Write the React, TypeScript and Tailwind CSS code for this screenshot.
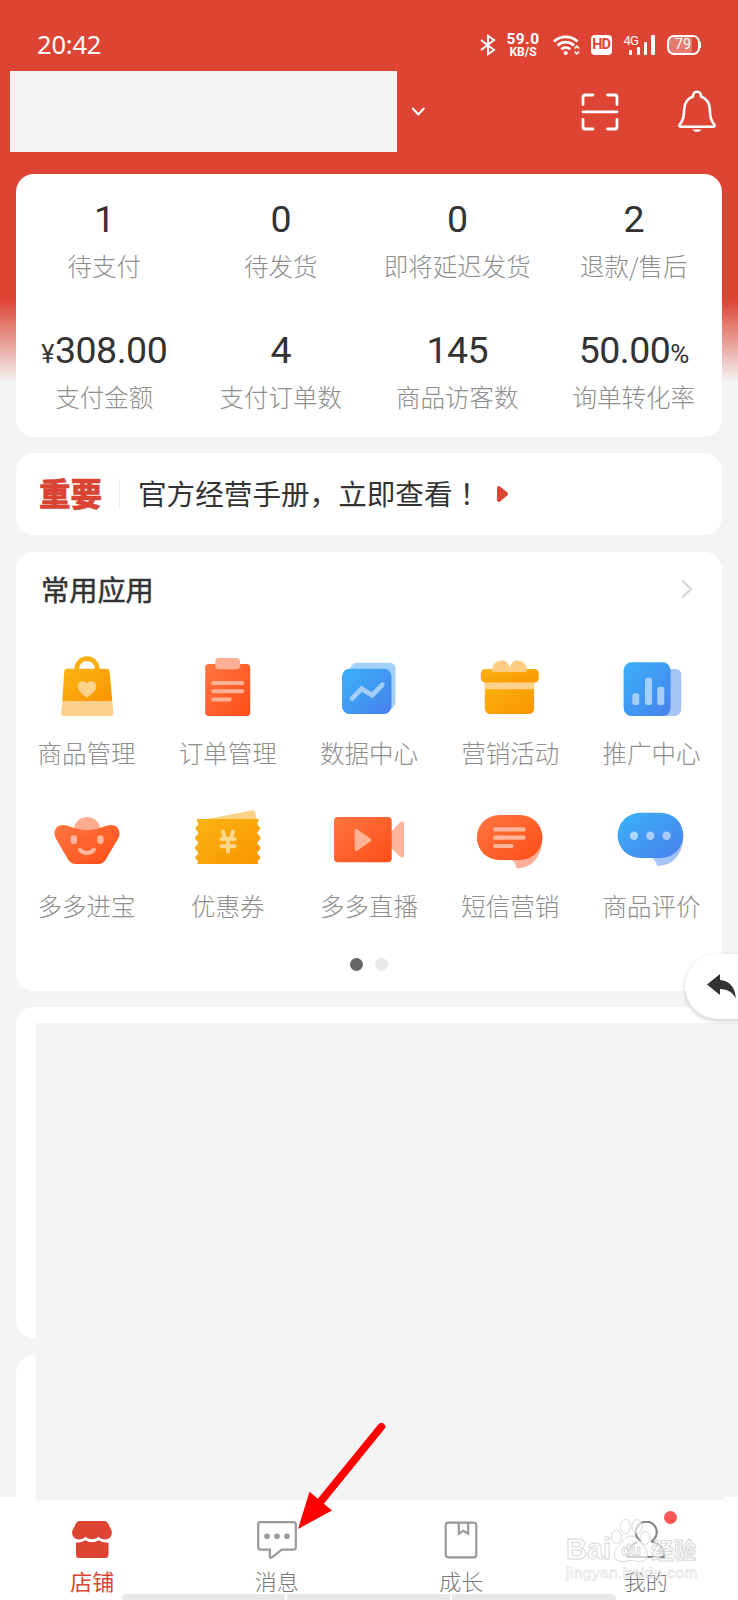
import type { ReactNode } from 'react'

interface Stat {
	value: string
	label: string
	prefix?: string
	suffix?: string
}

const stats: Stat[] = [
	{ value: '1', label: '待支付' },
	{ value: '0', label: '待发货' },
	{ value: '0', label: '即将延迟发货' },
	{ value: '2', label: '退款/售后' },
	{ value: '308.00', label: '支付金额', prefix: '¥' },
	{ value: '4', label: '支付订单数' },
	{ value: '145', label: '商品访客数' },
	{ value: '50.00', label: '询单转化率', suffix: '%' },
]

const apps: { label: string; icon: ReactNode }[] = [
	{ label: '商品管理', icon: <BagIcon /> },
	{ label: '订单管理', icon: <OrderIcon /> },
	{ label: '数据中心', icon: <DataIcon /> },
	{ label: '营销活动', icon: <GiftIcon /> },
	{ label: '推广中心', icon: <PromoIcon /> },
	{ label: '多多进宝', icon: <IngotIcon /> },
	{ label: '优惠券', icon: <CouponIcon /> },
	{ label: '多多直播', icon: <LiveIcon /> },
	{ label: '短信营销', icon: <SmsIcon /> },
	{ label: '商品评价', icon: <ReviewIcon /> },
]

const tabs: { label: string; icon: ReactNode; active?: boolean; dot?: boolean }[] = [
	{ label: '店铺', icon: <StoreIcon />, active: true },
	{ label: '消息', icon: <MessageIcon /> },
	{ label: '成长', icon: <BookIcon /> },
	{ label: '我的', icon: <UserIcon />, dot: true },
]

// Shared gradients for the app icons
function Gradients() {
	return (
		<svg className="absolute h-0 w-0" aria-hidden="true">
			<defs>
				<linearGradient id="amber" x1="0" y1="0" x2="1" y2="1">
					<stop offset="0" stopColor="#fbb414" />
					<stop offset="1" stopColor="#fa9500" />
				</linearGradient>
				<linearGradient id="orange" x1="0" y1="0" x2="1" y2="1">
					<stop offset="0" stopColor="#ff7640" />
					<stop offset="1" stopColor="#fd4d17" />
				</linearGradient>
				<linearGradient id="blue" x1="0" y1="0" x2="1" y2="1">
					<stop offset="0" stopColor="#39b2f8" />
					<stop offset="1" stopColor="#4880ec" />
				</linearGradient>
			</defs>
		</svg>
	)
}

function AppIcon({ children }: { children: ReactNode }) {
	return (
		<svg width="72" height="70" viewBox="0 0 72 70" fill="none">
			{children}
		</svg>
	)
}

function BagIcon() {
	return (
		<AppIcon>
			<path d="M25.8 20v-1.200a10.200 10.200 0 0 1 20.400 0V20" stroke="#fbac12" strokeWidth="4.600" />
			<path d="M16.500 18.700h39a3.200 3.200 0 0 1 3.200 3L61.300 51H11.200l2-29.300a3.200 3.200 0 0 1 3.300-3z" fill="url(#amber)" />
			<path d="M11.200 51h50.100l1 11.500a3.300 3.300 0 0 1-3.300 3.500H13.400a3.300 3.300 0 0 1-3.300-3.500z" fill="#fdd08a" />
			<path d="M36 47.800c-3-2.500-9.200-6.600-9.200-11.300 0-5.600 6.700-6.900 9.200-2.900 2.500-4 9.200-2.700 9.200 2.900 0 4.700-6.200 8.800-9.200 11.300z" fill="#fdd38e" />
		</AppIcon>
	)
}

function OrderIcon() {
	return (
		<AppIcon>
			<rect x="13.200" y="14" width="45" height="52" rx="3.500" fill="url(#orange)" />
			<rect x="23.200" y="8" width="25" height="11.300" rx="4" fill="#ffaf95" />
			<path d="M21.200 33h29M21.200 41.300h29M21.200 49.500h16.500" stroke="#ffb095" strokeWidth="4" strokeLinecap="round" />
		</AppIcon>
	)
}

function DataIcon() {
	return (
		<AppIcon>
			<path d="M24.500 12.700H57a5.500 5.500 0 0 1 5.500 5.500V52c0 3-1.800 5-4.200 7L17.500 19.500c0-4 3-6.800 7-6.800z" fill="#a3d0fa" />
			<rect x="9" y="18.700" width="49.500" height="45.300" rx="7.500" fill="url(#blue)" />
			<path d="M19 48.500l9.600-9.800 10.600 6.500 10-10.400" stroke="#a4cdfa" strokeWidth="4.800" strokeLinecap="round" />
		</AppIcon>
	)
}

function GiftIcon() {
	return (
		<AppIcon>
			<path d="M10.800 28h49.300v30.500a5.500 5.500 0 0 1-5.500 5.500H16.300a5.500 5.500 0 0 1-5.500-5.500z" fill="url(#amber)" />
			<path d="M10.800 32h49.300v7.300H10.800z" fill="#fdd38c" />
			<rect x="6.800" y="19" width="58" height="13.600" rx="4.500" fill="url(#amber)" />
			<path d="M18.100 20c0-5.500 5-9.700 10-9.700 3.500 0 6 3.500 7.600 7.200 1.600-3.700 4-7.200 7.500-7.200 5 0 9.700 4.200 9.700 9.700 0 1.500-.8 2-2 2H20c-1.200 0-1.900-.5-1.900-2z" fill="#fdce82" />
		</AppIcon>
	)
}

function PromoIcon() {
	return (
		<AppIcon>
			<path d="M50 19h11a5.300 5.300 0 0 1 5.300 5.300V59a7 7 0 0 1-7 7H48z" fill="#a6c5f6" />
			<rect x="8.600" y="12.300" width="47" height="53.700" rx="8" fill="url(#blue)" />
			<rect x="17.300" y="43.300" width="7" height="11.700" rx="2.500" fill="#a4cff9" />
			<rect x="30" y="27.700" width="7" height="27.300" rx="2.500" fill="#a4cff9" />
			<rect x="42.300" y="36.700" width="7" height="18.300" rx="2.500" fill="#a4cff9" />
		</AppIcon>
	)
}

function IngotIcon() {
	return (
		<AppIcon>
			<path d="M12 22c6 0 10 4.500 24 4.500S54 22 60 22c6.500 0 9.800 5.500 8 11.500-1 3-7.500 13-11.800 20.800C53.500 59 51.500 61 48 61H24c-3.500 0-5.500-2-8.200-6.700C11.500 46.500 5 36.500 4 33.500 2.200 27.500 5.500 22 12 22z" fill="url(#orange)" />
			<path d="M22.800 24.500C25 18 30 14 36 14s11.200 4 13.400 10.500c-4 1.700-8.400 2.400-13.400 2.400s-9.200-.7-13.200-2.400z" fill="#ffab8e" />
			<rect x="19.600" y="32.300" width="6.400" height="8.600" rx="3.200" fill="#ffb79d" />
			<rect x="46.200" y="32.300" width="6.400" height="8.600" rx="3.200" fill="#ffb79d" />
			<path d="M29 46.800c3.500 4.300 10.500 4.300 14 0" stroke="#ffb79d" strokeWidth="4" strokeLinecap="round" />
		</AppIcon>
	)
}

function CouponIcon() {
	return (
		<AppIcon>
			<path d="M12 16.500L60 7.400a3 3 0 0 1 3.400 2.400l1 6.700z" fill="#fdd287" />
			<path
				d="M5 16h61.500v2.500q-2.500 2.500 0 4.500 3 2 .5 4.500-3.500 2.500 0 5 3 2.500 0 5-3.500 2.500 0 5 3 2.500 0 5-3.500 2.500 0 5 2.500 2.500-.5 4.500-2 2 0 4H5q2-2 0-4-3-2-.5-4.500 3.500-2.500 0-5-3-2.500 0-5 3.500-2.500 0-5-3-2.500 0-5 3.500-2.500 0-5-2.500-2.500.5-4.500 2.500-2 0-4.500z"
				fill="url(#amber)"
			/>
			<path d="M31 28.500l1.500 6M41 28.500l-1.500 6M29.500 36h13M29.500 43.300h13M36 36v12.500" stroke="#fed78a" strokeWidth="4" strokeLinecap="round" />
		</AppIcon>
	)
}

function LiveIcon() {
	return (
		<AppIcon>
			<path d="M58 29l9-9.500c2-2 4-1.200 4 1.200v31.500c0 2.400-2 3.400-4 1.400L58 45z" fill="#ffb399" />
			<rect x="1" y="14" width="57.700" height="45.300" rx="4" fill="url(#orange)" />
			<path d="M21.700 28c0-1.800 1.400-2.400 2.800-1.400l12.500 8.600c1.600 1.100 1.600 2.500 0 3.600l-12.500 8.600c-1.400 1-2.800.4-2.800-1.400z" fill="#ffb296" />
		</AppIcon>
	)
}

function SmsIcon() {
	return (
		<AppIcon>
			<path d="M37 56.500c3 1.500 5 4.500 5.300 8.700 14 .3 25.200-10 25.700-27z" fill="#ffaf95" />
			<rect x="2.800" y="12" width="65.700" height="45" rx="22.500" fill="url(#orange)" />
			<path d="M21.100 26.400h28.500M21.100 34.700h28.500M21.100 43h16.500" stroke="#ffb599" strokeWidth="4.200" strokeLinecap="round" />
		</AppIcon>
	)
}

function ReviewIcon() {
	return (
		<AppIcon>
			<path d="M35 54.500c4 1 6.500 4 7 8.200 14 .5 25.500-9.700 26-27z" fill="#a5c4f6" />
			<rect x="2.600" y="9.700" width="65.700" height="45.300" rx="22.600" fill="url(#blue)" />
			<circle cx="19" cy="32.700" r="4.200" fill="#a9d6fb" />
			<circle cx="35.300" cy="32.700" r="4.200" fill="#a9cffa" />
			<circle cx="51.600" cy="32.700" r="4.200" fill="#abc9f8" />
		</AppIcon>
	)
}

function StoreIcon() {
	return (
		<svg width="40" height="38" viewBox="0 0 40 38" fill="#dd4433">
			<path d="M8 0h24c2 0 3 .8 4 2.400l3 5.800c2.500 5-.5 10.300-6 10.300-2.700 0-4.700-.9-6.400-2.700-3.500 3.300-9.700 3.300-13.200 0-1.700 1.800-3.700 2.700-6.400 2.700-5.500 0-8.500-5.300-6-10.300l3-5.800C5 .8 6 0 8 0z" />
			<path d="M4 21.500c3.700.3 6.500-.5 9-2.200 4.200 2.600 9.800 2.600 14 0 2.500 1.700 5.300 2.500 9.500 2.200v12.200c0 2-1.200 3.300-3.200 3.300H7c-2 0-3-1.300-3-3.300z" />
		</svg>
	)
}

function MessageIcon() {
	return (
		<svg width="40" height="38" viewBox="0 0 40 38" fill="none">
			<path d="M3.500 1.200h33a2.300 2.300 0 0 1 2.300 2.300v22.800a2.300 2.300 0 0 1-2.300 2.300H25l-10.500 8c-.9.600-1.600.2-1.600-.8v-7.200H3.500a2.300 2.300 0 0 1-2.300-2.300V3.500a2.300 2.300 0 0 1 2.300-2.300z" stroke="#999" strokeWidth="2.200" />
			<circle cx="10" cy="15.300" r="2.800" fill="#999" />
			<circle cx="20" cy="15.300" r="2.800" fill="#999" />
			<circle cx="30" cy="15.300" r="2.800" fill="#999" />
		</svg>
	)
}

function BookIcon() {
	return (
		<svg width="40" height="38" viewBox="0 0 40 38" fill="none" stroke="#999" strokeWidth="2.200">
			<rect x="4.700" y="1.700" width="30.600" height="34.600" rx="2.500" />
			<path d="M17.800 1.700v11l4.700-3 4.700 3v-11" />
		</svg>
	)
}

function UserIcon() {
	return (
		<svg width="40" height="38" viewBox="0 0 40 38" fill="none" stroke="#888" strokeWidth="2.200">
			<path d="M15.500 20.500A10.500 10.500 0 1 1 25 20.500" />
			<path d="M25 20.500c8 1.500 13 6 13.500 15.500h-37c.3-8 4-13 10-15" />
		</svg>
	)
}

function StatusBar() {
	return (
		<div className="flex h-[70px] items-center pt-[20px] pr-[37px] pl-[37px] text-white">
			<span className="font-['Noto_Sans'] text-[25.5px] leading-none tracking-[-0.200px]">20:42</span>
			<svg className="ml-auto" width="16" height="22" viewBox="0 0 16 22" fill="none" stroke="#fff" strokeWidth="2">
				<path d="M1 6l13 10-6 4.200V1.800L14 6 1 16" />
			</svg>
			<div className="ml-[11px] flex w-[33px] flex-col items-center font-[Roboto] font-bold">
				<span className="text-[15.500px] leading-[13px] tracking-[0.500px]">59.0</span>
				<span className="text-[12px] leading-[12px]">KB/S</span>
			</div>
			<svg className="ml-[13px]" width="28" height="22" viewBox="0 0 28 22" fill="none" stroke="#fff" strokeWidth="2.800">
				<path d="M1 7.500a17 17 0 0 1 23.500 0" />
				<path d="M4.500 11.500a12 12 0 0 1 16.500 0" />
				<path d="M8.300 15.300a6.800 6.800 0 0 1 9 0" />
				<circle cx="12.700" cy="19" r="2" fill="#fff" stroke="none" />
				<path d="M21.500 14.500l2.300-2.300 2.300 2.300M21.500 17.500l2.300 2.300 2.300-2.300" strokeWidth="1.600" />
			</svg>
			<span className="ml-[10px] flex h-[20px] w-[21px] items-center justify-center rounded-[4px] bg-white font-[Roboto] text-[14.500px] leading-none font-bold tracking-[-1px] text-[#dd4433]">
				HD
			</span>
			<div className="relative ml-[12px] flex h-[20px] w-[31px] items-end justify-end gap-[4.200px]">
				<span className="absolute -top-px left-0 font-[Roboto] text-[13px] leading-none tracking-[-0.800px]">4G</span>
				<i className="h-[5.500px] w-[3.200px] rounded-[1px] bg-white" />
				<i className="h-[8px] w-[3.200px] rounded-[1px] bg-white" />
				<i className="h-[13px] w-[3.200px] rounded-[1px] bg-white" />
				<i className="h-[20px] w-[3.200px] rounded-[1px] bg-white" />
			</div>
			<div className="ml-[12px] flex items-center">
				<span className="flex h-[20px] w-[33px] items-center justify-center rounded-[7px] border-2 border-white bg-[linear-gradient(90deg,#e57b6e_78%,#dd4433_78%)] font-[Roboto] text-[14.500px] leading-none">
					79
				</span>
				<i className="h-[6px] w-[1.500px] bg-white" />
			</div>
		</div>
	)
}

function ShopHeader() {
	return (
		<div className="flex h-[104px] items-start pt-px pr-[22px] pl-[10px]">
			<div className="h-[81px] w-[387px] bg-[#f4f4f4]" />
			<svg className="mt-[36px] ml-[14px]" width="14" height="10" viewBox="0 0 14 10" fill="none" stroke="#fff" strokeWidth="2" strokeLinecap="round">
				<path d="M1.800 1.500l5.500 6 5.500-6" />
			</svg>
			<svg className="mt-[22px] ml-auto" width="38" height="38" viewBox="0 0 38 38" fill="none" stroke="#fff" strokeWidth="2.800" strokeLinecap="round" strokeLinejoin="round">
				<path d="M2 11.500V4a2 2 0 0 1 2-2h8M26.500 2H34a2 2 0 0 1 2 2v7.500M2 26.500V34a2 2 0 0 0 2 2h8M26.500 36H34a2 2 0 0 0 2-2v-7.500M2 18.800h34" />
			</svg>
			<svg className="mt-[19px] ml-[59px]" width="38" height="43" viewBox="0 0 38 43" fill="none" stroke="#fff" strokeWidth="2.600" strokeLinejoin="round">
				<path d="M15 6.500C15 3.300 16.500 1.800 19 1.800S23 3.300 23 6.500c5.500 2 8.500 6.500 8.800 12.500.3 7.500.8 11 4.400 15.500.8 1.200.5 2.200-.9 2.200H2.700c-1.400 0-1.700-1-.9-2.200C5.400 30 5.900 26.500 6.200 19c.3-6 3.300-10.500 8.800-12.500z" />
				<path d="M14.500 39.500h9c-1 1.500-2.500 2.300-4.500 2.300s-3.500-.8-4.500-2.300z" fill="#fff" stroke="none" />
			</svg>
		</div>
	)
}

function StatsCard() {
	return (
		<section className="mx-4 grid h-[263px] grid-cols-4 grid-rows-[131px_132px] rounded-[18px] bg-white">
			{stats.map((stat) => (
				<div key={stat.label} className="flex flex-col items-center pt-[26px] whitespace-nowrap">
					<p className="flex h-[38px] items-baseline font-[Roboto] text-[37.500px] leading-[38px] tracking-[-0.500px] text-[#333]">
						{stat.prefix && <span className="mr-px text-[25px]">{stat.prefix}</span>}
						{stat.value}
						{stat.suffix && <span className="text-[26px]">{stat.suffix}</span>}
					</p>
					<p className="mt-[11px] text-[24.500px] leading-[34px] font-light text-[#8e8e8e]">{stat.label}</p>
				</div>
			))}
		</section>
	)
}

function NoticeCard() {
	return (
		<section className="mx-4 mt-4 flex h-[82px] items-center rounded-[18px] bg-white pl-[23px]">
			<strong className="-mt-[2px] text-[31.500px] leading-none font-black text-[#d84334] [-webkit-text-stroke:0.500px_#d84334]">重要</strong>
			<i className="ml-[17px] h-[30px] w-px bg-[#eee]" />
			<p className="-mt-[2px] ml-[18px] text-[28.600px] leading-none whitespace-nowrap text-[#333]">
				官方经营手册，立即查看
				<span className="font-['Noto_Sans_CJK_TC',sans-serif]" lang="zh-TW">！</span>
			</p>
			<svg className="ml-[15px]" width="13" height="18" viewBox="0 0 13 18" fill="#dd4433">
				<path d="M1 3.200c0-2 1.500-2.800 3-1.600l7 5.700c1.500 1.200 1.500 2.200 0 3.400l-7 5.700c-1.500 1.200-3 .4-3-1.600z" />
			</svg>
		</section>
	)
}

function AppsCard() {
	return (
		<section className="mx-4 mt-[17px] flex h-[439px] flex-col rounded-[18px] bg-white">
			<div className="flex h-[74px] items-center justify-between pr-[29px] pl-[25px]">
				<h2 className="text-[28.200px] leading-none text-[#333] [-webkit-text-stroke:0.500px_#333]">常用应用</h2>
				<svg width="12" height="20" viewBox="0 0 12 20" fill="none" stroke="#d8d8d8" strokeWidth="2.400">
					<path d="M1 1.500l9 8.500-9 8.500" />
				</svg>
			</div>
			<div className="mt-[24px] grid grid-cols-5">
				{apps.map((app) => (
					<div key={app.label} className="flex h-[153px] flex-col items-center">
						{app.icon}
						<p className="mt-[16px] text-[24.500px] leading-[34px] font-light whitespace-nowrap text-[#8e8e8e]">{app.label}</p>
					</div>
				))}
			</div>
			<div className="mt-[2px] flex justify-center gap-[12px]">
				<i className="h-[13px] w-[13px] rounded-full bg-[#666]" />
				<i className="h-[13px] w-[13px] rounded-full bg-[#e8e8e8]" />
			</div>
		</section>
	)
}

function TabBar() {
	return (
		<nav className="relative h-[103px] shrink-0 bg-white">
			<div className="mr-[13px] ml-[36px] h-[3px] bg-[#f4f4f4]" />
			<div className="grid grid-cols-4 pt-[21px]">
				{tabs.map((tab) => (
					<div key={tab.label} className="flex flex-col items-center">
						<div className="relative">
							{tab.icon}
							{tab.dot && <i className="absolute -top-[10px] left-[38px] h-[13px] w-[13px] rounded-full bg-[#fb5555]" />}
						</div>
						<span className={`mt-[6px] text-[22px] leading-[30px] ${tab.active ? 'text-[#dd4433]' : 'font-light text-[#777]'}`}>
							{tab.label}
						</span>
					</div>
				))}
			</div>
			<div className="absolute bottom-0 left-[122px] flex h-[6px] w-[494px] gap-[2px] overflow-hidden rounded-t-[4px]">
				<i className="w-[163px] bg-[#e8e8e8]" />
				<i className="w-[163px] bg-[#e8e8e8]" />
				<i className="flex-1 bg-[#e8e8e8]" />
			</div>
			<Watermark />
		</nav>
	)
}

function Watermark() {
	return (
		<div className="absolute top-[20px] left-[566px] w-[132px] text-white/60">
			<div className="flex h-[46px] items-end leading-none font-bold [-webkit-text-stroke:1px_#d9d9d9]">
				<span className="font-['Liberation_Sans'] text-[29px] leading-[28px]">Bai</span>
				<div className="relative -ml-px h-[46px] w-[41px]">
					<svg width="41" height="46" viewBox="0 0 41 46" fill="#fff" fillOpacity="0.6" stroke="#d9d9d9">
						<ellipse cx="6.500" cy="20" rx="5" ry="6.500" />
						<ellipse cx="15.500" cy="9.500" rx="5" ry="7" />
						<ellipse cx="27" cy="9.500" rx="5" ry="7" />
						<ellipse cx="35" cy="21" rx="5" ry="6.500" />
						<path d="M20.500 19c-6 0-7.500 6-12 10C2 35 3 44.500 11.500 44.500c4 0 6-1 9-1s6 1 10 1c8 0 9-9.500 3-15.500-4.500-4.500-7-10-13-10z" />
					</svg>
					<span className="absolute top-[26px] left-[11px] font-['Liberation_Sans'] text-[16px] leading-none">du</span>
				</div>
				<span className="text-[22.500px] leading-[28px]">经验</span>
			</div>
			<p className="mt-px font-['Liberation_Sans'] text-[15.500px] leading-[18px] tracking-[0.400px] [-webkit-text-stroke:0.500px_#d9d9d9]">
				jingyan.baidu.com
			</p>
		</div>
	)
}

export default function App() {
	return (
		<main className="relative flex h-[1600px] w-[738px] flex-col overflow-hidden bg-[#f4f4f4] bg-[linear-gradient(#dd4433_300px,#f4f4f4_382px)] font-['Noto_Sans_CJK_SC',sans-serif]">
			<Gradients />
			<StatusBar />
			<ShopHeader />
			<StatsCard />
			<NoticeCard />
			<AppsCard />

			{/* Blank content panels, only their left edges show */}
			<div className="mt-4 ml-4 h-[331px] rounded-l-[18px] bg-white pt-4 pl-[20px]">
				<div className="h-[315px] bg-[#f4f4f4]" />
			</div>
			<div className="mt-[17px] ml-4 h-[142px] rounded-tl-[18px] bg-white pl-[20px]">
				<div className="h-[142px] bg-[#f4f4f4]" />
			</div>
			<TabBar />

			{/* Floating back button */}
			<button type="button" className="absolute top-[954px] left-[685px] h-[65px] w-[60px] rounded-l-full bg-white pl-[22px] shadow-[0_2px_5px_rgba(0,0,0,0.2)]">
				<svg width="29" height="26" viewBox="0 0 29 26" fill="#333">
					<path d="M13 0v6c9 .5 15.500 7 15.700 18.500-3-6-8-9.500-15.700-9.500v6L0 10.500z" />
				</svg>
			</button>

			{/* Pointer to the messages tab */}
			<svg className="absolute top-[1420px] left-[295px]" width="94" height="114" viewBox="0 0 94 114" fill="#f00">
				<path d="M83.500 4.300a3.800 3.800 0 0 1 5.900 4.800L27 86l-6-5z" />
				<path d="M3 109l11.500-37.300L37 90.500z" />
			</svg>
		</main>
	)
}
